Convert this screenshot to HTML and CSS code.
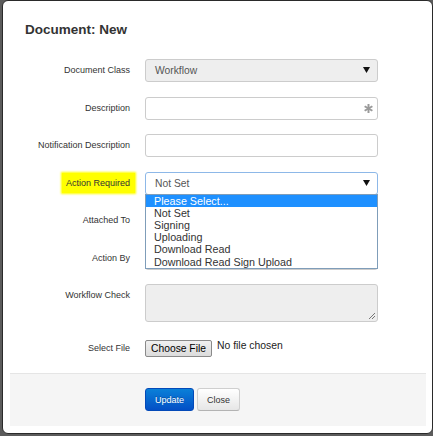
FILE: index.html
```html
<!DOCTYPE html>
<html lang="en">
<head>
  <meta charset="UTF-8">
  <title>Document: New</title>
  <link rel="stylesheet" href="styles.css">
</head>
<body>

  <div class="modal">
    <div class="modal-header">
      <h3>Document: New</h3>
    </div>

    <div class="modal-body">
      <!-- Document Class -->
      <div class="row">
        <label>Document Class</label>
        <div class="field select disabled">
          Workflow
          <svg class="caret" width="7" height="6" viewBox="0 0 7 6"><path d="M0 0h7L3.5 6z"/></svg>
        </div>
      </div>

      <!-- Description -->
      <div class="row">
        <label>Description</label>
        <div class="field">
          <svg class="required" width="9" height="9" viewBox="0 0 10 10">
            <g stroke="#9a9a9a" stroke-width="2.2">
              <line x1="5" y1="0" x2="5" y2="10"/>
              <line x1="0.7" y1="2.5" x2="9.3" y2="7.5"/>
              <line x1="0.7" y1="7.5" x2="9.3" y2="2.5"/>
            </g>
          </svg>
        </div>
      </div>

      <!-- Notification Description -->
      <div class="row">
        <label>Notification Description</label>
        <div class="field"></div>
      </div>

      <!-- Action Required (open dropdown) -->
      <div class="row">
        <label><span class="marker">Action Required</span></label>
        <div class="field select focus">
          Not Set
          <svg class="caret" width="7" height="6" viewBox="0 0 7 6"><path d="M0 0h7L3.5 6z"/></svg>
          <ul class="options">
            <li class="active">Please Select...</li>
            <li>Not Set</li>
            <li>Signing</li>
            <li>Uploading</li>
            <li>Download Read</li>
            <li>Download Read Sign Upload</li>
          </ul>
        </div>
      </div>

      <div class="row">
        <label>Attached To</label>
        <div class="field"></div>
      </div>

      <div class="row">
        <label>Action By</label>
        <div class="field"></div>
      </div>

      <!-- Workflow Check -->
      <div class="row">
        <label>Workflow Check</label>
        <div class="field textarea disabled">
          <svg class="grip" width="7" height="7" viewBox="0 0 7 7">
            <g stroke="#777" stroke-width="1">
              <line x1="1" y1="7" x2="7" y2="1"/>
              <line x1="4" y1="7" x2="7" y2="4"/>
            </g>
          </svg>
        </div>
      </div>

      <!-- Select File -->
      <div class="row">
        <label>Select File</label>
        <div class="file">
          <button class="file-button">Choose File</button>
          <span class="file-name">No file chosen</span>
        </div>
      </div>
    </div>

    <div class="modal-footer">
      <button class="btn btn-primary">Update</button>
      <button class="btn">Close</button>
    </div>
  </div>

</body>
</html>
```

FILE: styles.css
```css
* {
  box-sizing: border-box;
}
body {
  margin: 0;
  background-color: #5c5c5c;
  font-family: "Liberation Sans", Arial, sans-serif;
  color: #333;
}
.modal {
  margin-left: 2px;
  width: 431px;
  height: 434px;
  background-color: #fff;
  border: 1px solid #2a2a2a;
  border-radius: 6px;
  padding-bottom: 6px;
}
.modal-header {
  padding: 21px 0 0 22px;
}
.modal-header h3 {
  margin: 0;
  font-size: 13.5px;
  line-height: 16px;
  font-weight: bold;
  color: #333;
}
.modal-body {
  padding: 21px 0 13.5px 0;
  display: flex;
  flex-direction: column;
  gap: 14.5px;
}
.row {
  display: grid;
  grid-template-columns: 127px 233px;
  column-gap: 15px;
  align-items: start;
}
.row label {
  text-align: right;
  font-size: 9px;
  line-height: 23px;
  color: #333;
}
.marker {
  background-color: #ffff00;
  padding: 5px 5px 5px 4px;
  margin-right: -5px;
  box-shadow: 0 0 2px 1px #ffff00;
}
.field {
  position: relative;
  height: 23px;
  border: 1px solid #ccc;
  border-radius: 3px;
  background-color: #fff;
  font-size: 10.3px;
  line-height: 21px;
  color: #555;
  padding-left: 9px;
}
.field.disabled {
  background-color: #eee;
}
.field.focus {
  border-color: #8db8e8;
}
.caret {
  position: absolute;
  right: 7px;
  top: 7px;
  fill: #111;
}
.required {
  position: absolute;
  right: 4px;
  top: 6px;
}
.textarea {
  height: 38px;
}
.grip {
  position: absolute;
  right: 2px;
  bottom: 2px;
}
.options {
  position: absolute;
  z-index: 2;
  left: -1px;
  top: 21px;
  width: 233px;
  height: 75px;
  margin: 0;
  padding: 0;
  list-style: none;
  background-color: #fff;
  border: 1px solid #7f9db9;
  font-size: 10.75px;
  line-height: 12.2px;
  color: #333;
}
.options li {
  padding-left: 8px;
}
.options li.active {
  background-color: #1e90ff;
  color: #fff;
}
.file {
  display: flex;
  align-items: flex-start;
  gap: 5px;
  padding-top: 3px;
}
.file-button {
  height: 17px;
  width: 67px;
  padding: 0;
  font-family: "Liberation Sans", Arial, sans-serif;
  font-size: 10.3px;
  color: #000;
  background: linear-gradient(#f0f0f0, #dcdcdc);
  border: 1px solid #8a8a8a;
  border-radius: 2px;
}
.file-name {
  font-size: 10.4px;
  line-height: 12px;
  color: #222;
}
.modal-footer {
  margin: 0 6px 0 7px;
  padding: 14px 0 15px 135px;
  background-color: #f5f5f5;
  border-top: 1px solid #e5e5e5;
  display: flex;
  gap: 3px;
}
.btn {
  height: 23px;
  padding: 0 9px;
  font-family: "Liberation Sans", Arial, sans-serif;
  font-size: 9px;
  color: #333;
  background: linear-gradient(#ffffff, #e6e6e6);
  border: 1px solid #cfcfcf;
  border-bottom-color: #b3b3b3;
  border-radius: 3px;
}
.btn-primary {
  width: 49px;
  color: #fff;
  background: linear-gradient(#0a80d8, #034fc6);
  border-color: #0349b8;
  text-shadow: 0 -1px 0 rgba(0, 0, 0, 0.25);
}
```
